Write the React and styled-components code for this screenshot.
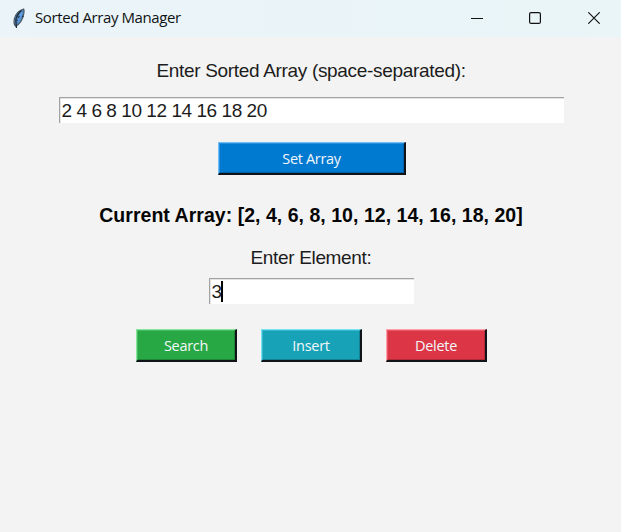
import React from "react";
import styled, { createGlobalStyle } from "styled-components";

const GlobalStyle = createGlobalStyle`
  * { box-sizing: border-box; }
  html, body { margin: 0; height: 100%; overflow: hidden; }
`;

const Window = styled.div`
  width: 621px;
  height: 532px;
  display: flex;
  flex-direction: column;
  background: #f3f3f3;
  font-family: "Liberation Sans", Arial, sans-serif;
`;

const TitleBar = styled.header`
  height: 37px;
  flex: none;
  display: flex;
  align-items: center;
  padding-left: 10px;
  background: linear-gradient(90deg, #eaf4f9, #eaf5f8);
`;

const Title = styled.h1`
  flex: 1;
  margin: 0 0 3px 8px;
  font: 400 15px/20px "Open Sans", "Noto Sans", sans-serif;
  letter-spacing: ${(p) => p.$spacing};
  color: #101314;
`;

const Controls = styled.div`
  display: flex;
  margin: 0 -2px 2px 0;
  svg { display: block; }
`;

const Control = styled.div`
  width: 58.5px;
  height: 36px;
  display: grid;
  place-items: center;
`;

const Body = styled.main`
  display: flex;
  flex-direction: column;
  align-items: center;
  padding-left: 1px;
`;

const Label = styled.label`
  margin-top: ${(p) => p.$top}px;
  height: 24px;
  white-space: nowrap;
  font-size: 19px;
  line-height: 24px;
  letter-spacing: ${(p) => p.$spacing}px;
  color: #1c1c1c;
`;

const Current = styled.div`
  margin-top: 28px;
  height: 24px;
  white-space: nowrap;
  font-size: 19.5px;
  line-height: 24px;
  font-weight: 700;
  letter-spacing: ${(p) => p.$spacing}px;
  color: #050505;
`;

const Entry = styled.div`
  width: ${(p) => p.$width}px;
  height: 26px;
  margin-top: ${(p) => p.$top}px;
  padding-left: 2px;
  display: flex;
  align-items: center;
  background: #fff;
  border: solid;
  border-width: 1px 0 0 1px;
  border-color: #a2a2a2;
  box-shadow: inset 1px 1px #e4e4e4;
  font-size: 19px;
  line-height: 24px;
  letter-spacing: -0.45px;
  white-space: pre;
  color: #1c1c1c;
`;

const Caret = styled.span`
  width: 2px;
  height: 21px;
  margin-left: -1px;
  background: #000;
`;

const Button = styled.button`
  width: ${(p) => p.$width}px;
  height: 33px;
  padding: 1px 0 0 1px;
  border: solid;
  border-width: 1px 2px 2px 1px;
  border-color: ${(p) => p.$light} #101418 #101418 ${(p) => p.$light};
  border-radius: 0;
  background: ${(p) => p.$color};
  box-shadow: inset 1px 1px ${(p) => p.$light}55, inset -1px -1px #0003;
  color: #f2f7fa;
  font: 400 14.5px/20px "Open Sans", "Noto Sans", sans-serif;
  letter-spacing: ${(p) => p.$spacing}px;
`;

const SetRow = styled.div`
  margin-top: 19px;
  height: 33px;
  display: flex;
  padding-left: 1px;
`;

const Actions = styled.div`
  margin-top: 25px;
  display: flex;
  gap: 24px;
`;

const Feather = () => (
  <svg width="17" height="22" viewBox="0 0 17 22">
    <path d="M13.7 1 C9 2.2 5.5 6 4.3 11 C3.7 14 4.3 17 5.8 18.2 C9.5 16.5 13 11.5 13.8 6 C14.1 4 14.4 2 13.7 1Z" fill="#4b84bd" stroke="#4c575f" strokeWidth="1.1" />
    <path d="M11.6 4 C11 8 9 11.5 7.8 14" fill="none" stroke="#5f9de0" strokeWidth="2.4" />
    <path d="M11.5 2.5 C8 5.5 6.3 9 5.8 12 L6.5 20" fill="none" stroke="#1d2833" strokeWidth="1.2" />
    <path d="M9.2 8 L8.5 10 M6.5 12 L7.8 12.6 M13.3 8 L12.2 9" stroke="#1d2b3a" strokeWidth="1.1" />
  </svg>
);

export default function App() {
  return (
    <Window>
      <GlobalStyle />
      <TitleBar>
        <Feather />
        <Title $spacing="-0.4px">Sorted Array Manager</Title>
        <Controls>
          <Control>
            <svg width="12" height="12"><path d="M0 6.5H12" stroke="#111" /></svg>
          </Control>
          <Control>
            <svg width="12" height="12"><rect x=".6" y=".6" width="10.8" height="10.8" rx="1.5" fill="none" stroke="#111" strokeWidth="1.2" /></svg>
          </Control>
          <Control>
            <svg width="12" height="12"><path d="M.3 .3L11.7 11.7M11.7 .3L.3 11.7" stroke="#111" strokeWidth="1.15" /></svg>
          </Control>
        </Controls>
      </TitleBar>
      <Body>
        <Label $top={22} $spacing={-0.32}>Enter Sorted Array (space-separated):</Label>
        <Entry $width={505} $top={14}>2 4 6 8 10 12 14 16 18 20</Entry>
        <SetRow>
          <Button $width={188} $color="#007ad0" $light="#73bdf5" $spacing={-0.33}>Set Array</Button>
        </SetRow>
        <Current $spacing={0.03}>Current Array: [2, 4, 6, 8, 10, 12, 14, 16, 18, 20]</Current>
        <Label $top={19} $spacing={-0.34}>Enter Element:</Label>
        <Entry $width={205} $top={8}>3<Caret /></Entry>
        <Actions>
          <Button $width={101} $color="#28a745" $light="#86e59b" $spacing={-0.3}>Search</Button>
          <Button $width={101} $color="#17a2b8" $light="#78e2f2" $spacing={-0.3}>Insert</Button>
          <Button $width={101} $color="#dc3545" $light="#ff9fa8" $spacing={-0.3}>Delete</Button>
        </Actions>
      </Body>
    </Window>
  );
}
